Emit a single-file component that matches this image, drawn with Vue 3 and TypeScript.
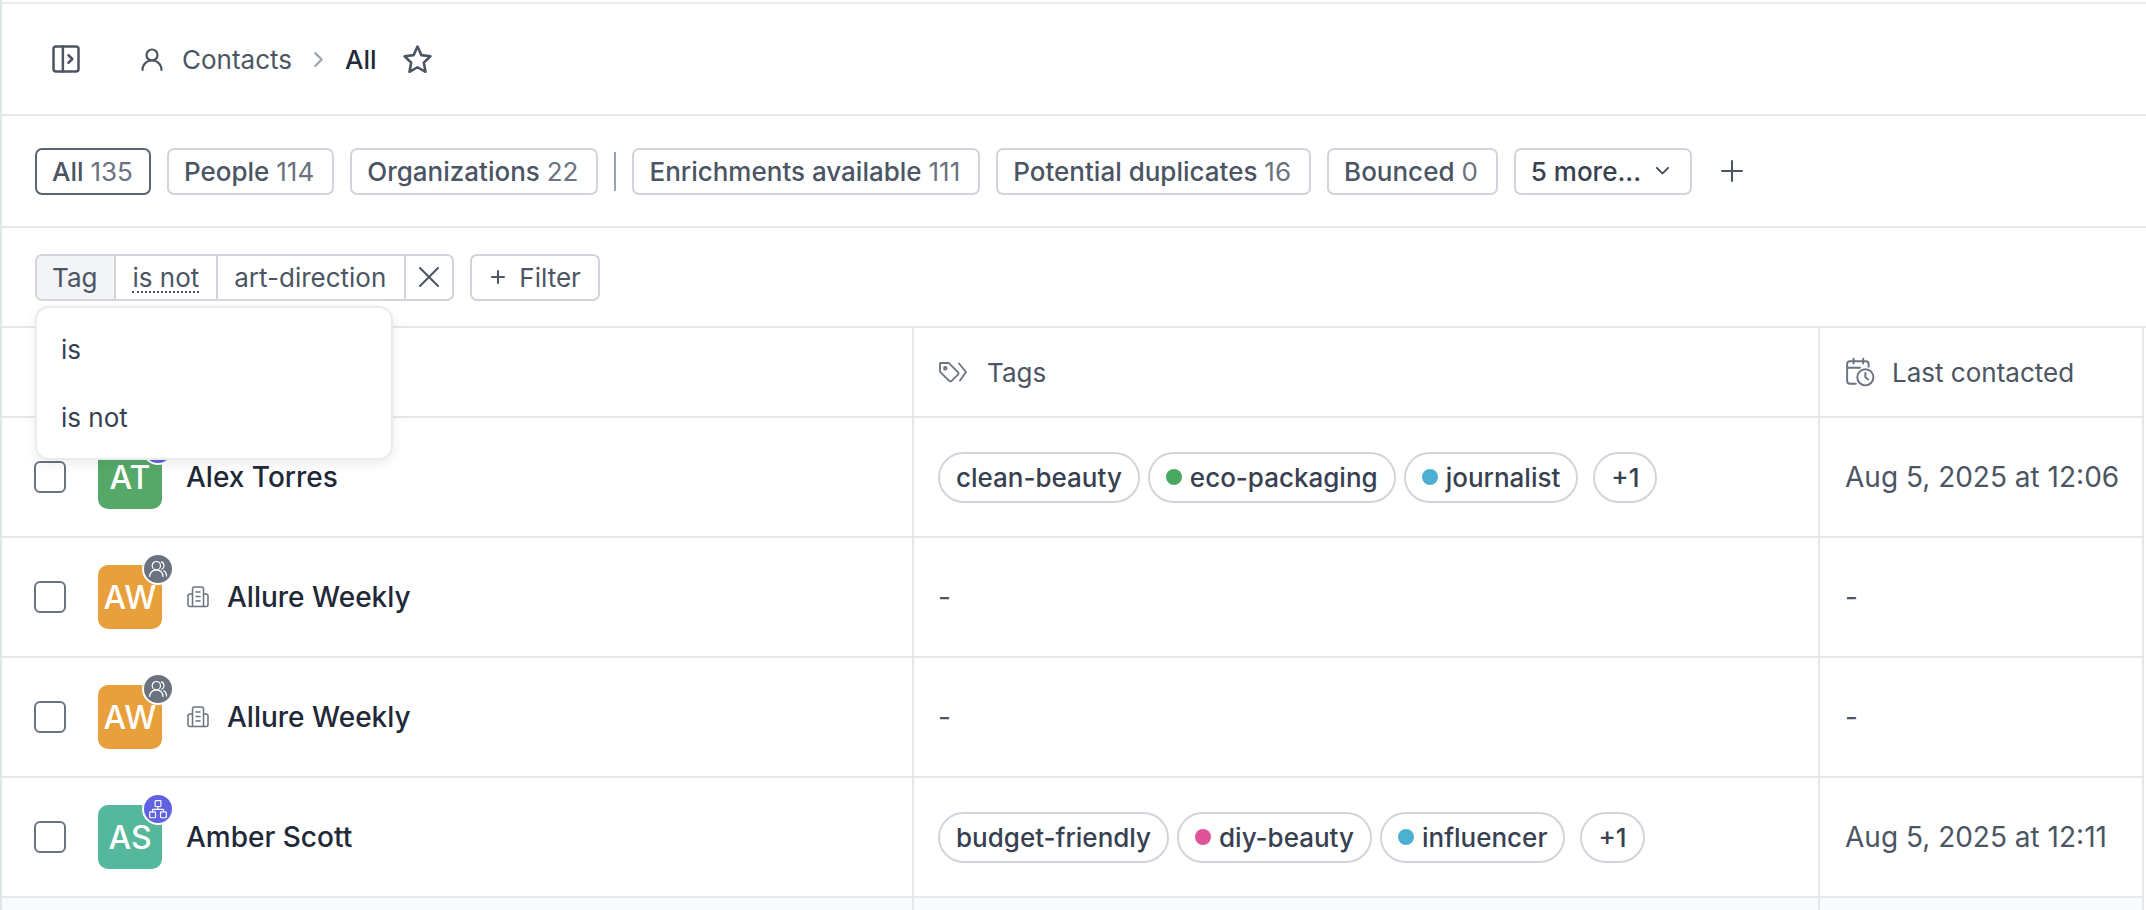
<script setup lang="ts">
interface Tag { label: string; dot?: string }
interface Row {
  initials: string; name: string; color: string; badge: 'group' | 'network';
  org: boolean; tags: Tag[]; more: string; date: string;
}
const views = [
  { label: 'All', count: '135', active: true },
  { label: 'People', count: '114' },
  { label: 'Organizations', count: '22' },
]
const views2 = [
  { label: 'Enrichments available', count: '111' },
  { label: 'Potential duplicates', count: '16' },
  { label: 'Bounced', count: '0' },
]
const rows: Row[] = [
  { initials: 'AT', name: 'Alex Torres', color: '#55a868', badge: 'network', org: false,
    tags: [{ label: 'clean-beauty' }, { label: 'eco-packaging', dot: '#4aa860' }, { label: 'journalist', dot: '#4bb0d2' }], more: '+1', date: 'Aug 5, 2025 at 12:06' },
  { initials: 'AW', name: 'Allure Weekly', color: '#e8a03c', badge: 'group', org: true, tags: [], more: '', date: '-' },
  { initials: 'AW', name: 'Allure Weekly', color: '#e8a03c', badge: 'group', org: true, tags: [], more: '', date: '-' },
  { initials: 'AS', name: 'Amber Scott', color: '#55b79b', badge: 'network', org: false,
    tags: [{ label: 'budget-friendly' }, { label: 'diy-beauty', dot: '#df5299' }, { label: 'influencer', dot: '#4bb0d2' }], more: '+1', date: 'Aug 5, 2025 at 12:11' },
]
</script>

<template>
  <div class="page">
    <header class="topbar">
      <svg class="ic panel" viewBox="0 0 24 24"><rect x="2" y="2" width="20" height="20" rx="2"/><path d="M9.500 2v20M14 9l3 3-3 3"/></svg>
      <svg class="ic person" viewBox="0 0 24 24"><circle cx="12" cy="8" r="5.500"/><path d="M2.500 23c0-5.500 4-9.500 9.500-9.500s9.500 4 9.500 9.500"/></svg>
      <span class="crumb">Contacts</span>
      <svg class="sep" viewBox="0 0 10 16"><path d="M2 2l6 6-6 6"/></svg>
      <span class="crumb current">All</span>
      <svg class="ic star" viewBox="0 0 24 24"><path d="M12 2l3 6.600 7 .9-5.100 4.900 1.300 7.100L12 18l-6.200 3.500 1.300-7.100L2 9.500l7-.9z"/></svg>
    </header>

    <section class="views">
      <button v-for="v in views" :key="v.label" class="chip" :class="{ active: v.active }">{{ v.label }} <span class="count">{{ v.count }}</span></button>
      <span class="divider"></span>
      <button v-for="v in views2" :key="v.label" class="chip">{{ v.label }} <span class="count">{{ v.count }}</span></button>
      <button class="chip more">5 more...
        <svg class="down" viewBox="0 0 12 8"><path d="M1.500 1.500L6 6l4.500-4.500"/></svg>
      </button>
      <svg class="add" viewBox="0 0 24 24"><path d="M12 2v20M2 12h20"/></svg>
    </section>

    <section class="filters">
      <div class="group">
        <span class="seg key">Tag</span>
        <span class="seg op"><span class="dotted">is not</span></span>
        <span class="seg art">art-direction</span>
        <span class="seg close"><svg viewBox="0 0 20 20"><path d="M2.500 2.500l15 15M17.500 2.500l-15 15"/></svg></span>
      </div>
      <button class="chip addfilter"><svg viewBox="0 0 16 16"><path d="M8 2v12M2 8h12"/></svg>Filter</button>
      <div class="menu">
        <div class="menu-item">is</div>
        <div class="menu-item">is not</div>
      </div>
    </section>

    <div class="table">
      <div class="cell first"></div>
      <div class="cell tagcol">
        <svg class="ic hico" viewBox="0 1 30 22"><path d="M2 3.500v7.400c0 .6.200 1.100.6 1.500l8.300 8.300c.8.800 2.200.8 3 0l5.800-5.800c.8-.8.8-2.200 0-3L11.400 3.600c-.4-.4-.9-.6-1.500-.6H2.500z"/><circle cx="7.300" cy="8.300" r="1.300"/><path d="M21 3.500l7 8.500-6 8.500"/></svg>
        <span>Tags</span>
      </div>
      <div class="cell datecol">
        <svg class="ic hico cal" viewBox="0 0 28 28"><path d="M10 25H4.500A2.500 2.500 0 0 1 2 22.500V6.500A2.500 2.500 0 0 1 4.500 4h15A2.500 2.500 0 0 1 22 6.500V9M8 1.500V6M17 1.500V6M2 10h12"/><circle cx="19" cy="19" r="7.500"/><path d="M19 15v4l2.500 2"/></svg>
        <span>Last contacted</span>
      </div>

      <template v-for="(r, i) in rows" :key="i">
        <div class="cell first">
          <span class="check"></span>
          <span class="avatar" :style="{ background: r.color }">
            {{ r.initials }}
            <span class="badge" :class="r.badge">
              <svg v-if="r.badge === 'group'" viewBox="0 0 24 24"><circle cx="10" cy="8" r="5"/><path d="M2 21c0-4.500 3.500-8 8-8s8 3.500 8 8M16 3.500c2 .6 3.200 2.400 3.200 4.500s-1.200 3.700-2.700 4.300M19 14c2 1 3.200 3.500 3.200 6.500"/></svg>
              <svg v-else viewBox="0 0 24 24"><rect x="8.500" y="2" width="7" height="7" rx="1"/><rect x="2" y="15.500" width="7" height="7" rx="1"/><rect x="15" y="15.500" width="7" height="7" rx="1"/><path d="M5.500 15.500V12.500h13v3M12 9v3.500"/></svg>
            </span>
          </span>
          <svg v-if="r.org" class="ic org" viewBox="0 0 22 22"><path d="M5.500 20.500V3a2 2 0 0 1 2-2h7a2 2 0 0 1 2 2v17.500M5.500 8H3a2 2 0 0 0-2 2v8.500a2 2 0 0 0 2 2h16a2 2 0 0 0 2-2V10a2 2 0 0 0-2-2h-2.500M9 6h4M9 10.500h4M9 15h4"/></svg>
          <span class="name">{{ r.name }}</span>
        </div>
        <div class="cell tagcol">
          <template v-if="r.tags.length">
            <span v-for="t in r.tags" :key="t.label" class="tag">
              <span v-if="t.dot" class="dot" :style="{ background: t.dot }"></span>{{ t.label }}
            </span>
            <span class="tag moretag">{{ r.more }}</span>
          </template>
          <span v-else class="dash">-</span>
        </div>
        <div class="cell datecol">
          <span class="date">{{ r.date }}</span>
        </div>
      </template>

      <div class="cell foot"></div>
      <div class="cell foot tagcol"></div>
      <div class="cell foot datecol"></div>
    </div>
  </div>
</template>

<style>
html, body { margin: 0; background: #fff; }
</style>

<style scoped>
.page {
  width: 2146px; height: 910px; overflow: hidden; box-sizing: border-box;
  border-left: 2px solid #dfe6e8; padding-top: 2px; background: #fff;
  font-family: Inter, "Liberation Sans", sans-serif; font-size: 26px; color: #4b5563;
}
.ic, .sep, .down, .add, .seg svg, .addfilter svg, .badge svg {
  fill: none; stroke: currentColor; stroke-width: 2; stroke-linecap: round; stroke-linejoin: round; flex: none;
}
.topbar {
  display: flex; align-items: center; height: 114px; box-sizing: border-box;
  border-top: 2px solid #e9ebee; border-bottom: 2px solid #e5e7eb; padding-left: 49px;
}
.panel { width: 30px; height: 30px; margin-right: 59px; }
.person { width: 24px; height: 26px; margin-right: 18px; stroke-width: 2.200; }
.sep { width: 11px; height: 17px; margin: 0 21px; color: #9ca3af; }
.current { color: #1f2937; font-weight: 500; }
.star { width: 31px; height: 31px; margin-left: 25px; }

.views {
  display: flex; align-items: center; height: 112px; box-sizing: border-box;
  border-bottom: 2px solid #e5e7eb; padding-left: 33px; gap: 16px;
}
.chip {
  display: inline-flex; align-items: center; height: 47px; box-sizing: border-box;
  padding: 0 18px 0 15px; background: #fff; border: 2px solid #d1d5db; border-radius: 7px;
  font: 500 26px Inter, "Liberation Sans", sans-serif; color: #4b5563; white-space: pre;
}
.chip.active { border-color: #5b6472; padding-right: 16px; }
.count { font-weight: 400; color: #6b7280; }
.divider { width: 2px; height: 39px; background: #9ca3af; }
.more { color: #374151; gap: 14px; white-space: nowrap; padding-right: 20px; }
.down { width: 15px; height: 10px; stroke-width: 1.400; }
.add { width: 24px; height: 24px; margin-left: 12px; }

.filters {
  position: relative; display: flex; align-items: center; height: 100px; box-sizing: border-box;
  border-bottom: 2px solid #e5e7eb; padding-left: 33px; gap: 16px;
}
.group {
  display: flex; height: 47px; box-sizing: border-box; border: 2px solid #d1d5db; border-radius: 7px; overflow: hidden;
}
.seg {
  display: flex; align-items: center; padding: 0 16px; border-right: 2px solid #d1d5db; white-space: nowrap;
}
.key { background: #f3f4f6; padding: 0 17px 0 15px; }
.op { padding: 0 17px 0 16px; }
.art { padding: 0 18px 0 16px; }
.dotted { border-bottom: 2px dotted #4b5563; line-height: 27px; margin-top: 2px; }
.close { border-right: 0; padding: 0 11px; }
.close svg { width: 24px; height: 24px; stroke-width: 1.700; }
.addfilter svg { width: 16px; height: 16px; }
.addfilter { gap: 13px; white-space: nowrap; font-weight: 400; padding: 0 17px 0 18px; }
.menu {
  position: absolute; left: 33px; top: 78px; width: 358px; height: 154px; box-sizing: border-box; z-index: 3;
  background: #fff; border: 2px solid #e9ebee; border-radius: 14px; padding: 7px 0;
  box-shadow: 0 4px 12px rgba(17, 24, 39, .08);
}
.menu-item { height: 68px; display: flex; align-items: center; padding-left: 24px; color: #374151; }

.table {
  display: grid; grid-template-columns: 910px 906px 1fr; grid-template-rows: 90px repeat(4, 120px) 40px;
}
.cell {
  display: flex; align-items: center; box-sizing: border-box; border-bottom: 2px solid #e5e7eb; min-width: 0;
}
.tagcol { border-left: 2px solid #e5e7eb; padding-left: 24px; gap: 8px; }
.datecol { border-left: 2px solid #e5e7eb; padding-left: 25px; border-right: 2px solid #e5e7eb; margin-right: 2px; }
.hico { width: 30px; height: 22px; margin-right: 11px; color: #6b7280; stroke-width: 1.800; }
.cal { width: 30px; height: 30px; margin-right: 17px; }
.first { padding-left: 32px; color: #1f2937; }
.check {
  width: 32px; height: 32px; box-sizing: border-box; border: 2px solid #6b7280; border-radius: 6px; margin-right: 32px; flex: none;
}
.avatar {
  position: relative; width: 64px; height: 64px; border-radius: 10px; margin-right: 25px; flex: none;
  display: flex; align-items: center; justify-content: center; color: #fff; font-size: 32px; font-weight: 500;
}
.badge {
  position: absolute; right: -12px; top: -12px; width: 28px; height: 28px; box-sizing: content-box;
  border: 2px solid #fff; border-radius: 50%; display: flex; align-items: center; justify-content: center; color: #fff;
}
.badge svg { width: 20px; height: 20px; stroke-width: 1.400; }
.badge.group { background: #6b7280; }
.badge.network { background: #5f61e0; }
.org { width: 22px; height: 22px; margin-right: 18px; color: #6b7280; stroke-width: 1.500; }
.name { font-weight: 500; font-size: 28px; color: #1f2937; }
.avatar + .name { margin-left: -1px; }
.tag {
  display: inline-flex; align-items: center; gap: 8px; height: 51px; box-sizing: border-box; padding: 0 16px;
  border: 2px solid #d1d5db; border-radius: 26px; color: #374151; font-weight: 500; white-space: nowrap;
}
.moretag { margin-left: 7px; }
.dot { width: 16px; height: 16px; border-radius: 50%; flex: none; }
.dash, .date { color: #4b5563; font-size: 28px; }
.foot { background: #f9fafb; border-bottom: 0; }
</style>
